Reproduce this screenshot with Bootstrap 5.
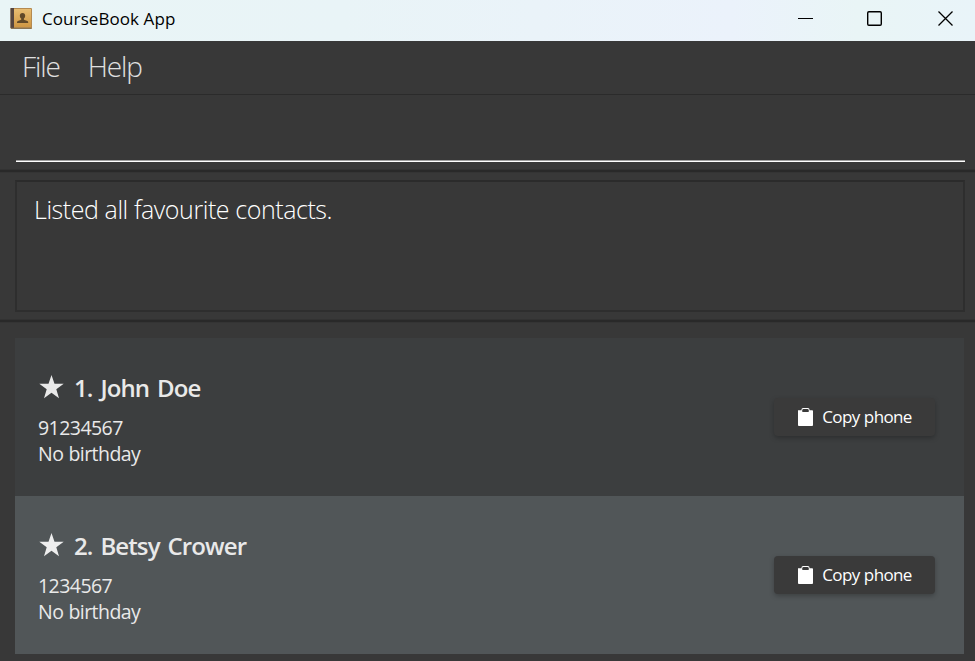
<!DOCTYPE html>
<html lang="en">
<head>
<meta charset="utf-8">
<meta name="viewport" content="width=device-width, initial-scale=1">
<title>CourseBook App</title>
<link href="https://cdn.jsdelivr.net/npm/bootstrap@5.3.0/dist/css/bootstrap.min.css" rel="stylesheet">
<style>
body { background: #383838; font-family: "Open Sans", "Noto Sans", sans-serif; color: #e9e9e9; }
.title-bar { height: 41px; background: linear-gradient(90deg, #e9f5f6 0%, #e9f4f7 35%, #ebf2fb 75%, #e9f5f6 88%, #e9f4f9 100%); color: #000; padding-left: 10px; }
.app-name { font-size: 17px; line-height: 24px; letter-spacing: .08px; margin-left: 10px; margin-top: -3px; }
.win-btns { margin-top: -3px; }
.menu-strip { height: 54px; border-bottom: 1px solid #2b2b2b; padding: 0 22px 3px; gap: 28px; }
.menu-strip a { font-size: 28px; font-weight: 300; line-height: 36px; color: #e0e0e0; letter-spacing: -1.1px; }
.command-area { height: 74px; padding: 0 10px 8px 16px; }
.command-line { height: 67px; border: 0; border-bottom: 1px solid #fff; box-shadow: inset 0 -1px #a0a0a0; background: transparent; border-radius: 0; }
.split-line { height: 4px; background: linear-gradient(#323232 0 1px, #292929 1px 3px, #343434 3px); }
.result-area { padding: 7px 10px 7px 15px; height: 146px; }
.result-box { height: 132px; border: 2px solid #2e2e2e; border-top-color: #2b2b2b; padding: 10px 17px; color: #fff; font-size: 25px; font-weight: 300; line-height: 34px; letter-spacing: -.43px; }
.person-list { padding: 15px 11px 7px 15px; }
.person { height: 158px; background: #3c3e3f; padding: 0 29px 0 23px; }
.person.alt { background: #515658; }
.person-text { padding-top: 3px; }
.person-name { font-size: 24px; font-weight: 600; line-height: 33px; letter-spacing: -.9px; word-spacing: 2.6px; gap: 9px; margin-bottom: 11px; }
.person-info { font-size: 19.5px; line-height: 26px; letter-spacing: -.55px; word-spacing: .6px; }
.copy-btn { width: 161px; height: 38px; background: #3a3a3a; color: #fff; border: 0; border-radius: 4px; box-shadow: 0 2px 5px rgba(0,0,0,.26); font-size: 17px; letter-spacing: -.63px; word-spacing: .5px; line-height: 24px; }
.copy-btn:hover { background: #444; color: #fff; }
</style>
</head>
<body class="vh-100 overflow-hidden">
<header class="title-bar d-flex align-items-center">
  <svg width="22" height="22" viewBox="0 0 22 22" style="margin-top:-4px">
    <defs><linearGradient id="cover" x1="0" y1="0" x2="0" y2="1"><stop offset="0" stop-color="#e8bd72"/><stop offset="1" stop-color="#cf9743"/></linearGradient></defs>
    <rect x=".5" y="0" width="21.5" height="21" rx="1" fill="#b58a50"/>
    <rect x=".5" y="0" width="3.5" height="20" fill="#54453f"/>
    <rect x="4" y="1" width="17" height="18" fill="url(#cover)"/>
    <path d="M1 20.4H21.5" stroke="#8b7552" stroke-width="1.2"/>
    <path d="M12.5 5c1.8 0 2.700 1.200 2.700 2.800 0 1.200-.6 2.200-1.300 2.800v1.200l3.500 1.300c.7.300.8 1 .8 2H7c0-1 .2-1.700.9-2l3.300-1.300v-1.200c-.8-.6-1.400-1.600-1.400-2.800C9.800 6.200 10.800 5 12.500 5z" fill="#614928"/>
  </svg>
  <span class="app-name">CourseBook App</span>
  <div class="win-btns ms-auto">
    <svg class="d-block" width="177" height="38" viewBox="0 0 177 38" fill="none" stroke="#000">
      <path d="M0 18.500H15"/>
      <rect x="69.700" y="11.700" width="13.600" height="13.600" rx="1.200" stroke-width="1.400"/>
      <path d="M140.500 11.500L154.500 25.500M154.500 11.500L140.500 25.500" stroke-width="1.300"/>
    </svg>
  </div>
</header>
<nav class="menu-strip d-flex align-items-center">
  <a class="text-decoration-none" href="#">File</a>
  <a class="text-decoration-none" href="#">Help</a>
</nav>
<div class="command-area">
  <input class="command-line w-100 d-block" type="text" aria-label="Command">
</div>
<div class="split-line"></div>
<section class="result-area"><div class="result-box"><span>Listed all favourite contacts.</span></div></section>
<div class="split-line"></div>
<main class="person-list">
  <article class="person d-flex align-items-center justify-content-between">
    <div class="person-text">
      <div class="person-name d-flex align-items-center">
        <svg width="27" height="26" viewBox="0 0 27 26" fill="#e9e9e9"><path d="M13.500 1l3 8.700h9.200l-7.400 5.600 2.700 8.900-7.500-5.400L6 24.200l2.700-8.900L1.300 9.700h9.200z"/></svg>
        <span>1. John Doe</span>
      </div>
      <div class="person-info"><span>91234567</span></div>
      <div class="person-info"><span>No birthday</span></div>
    </div>
    <button class="copy-btn btn d-flex align-items-center justify-content-center p-0 gap-2" type="button">
      <svg width="17" height="20" viewBox="0 0 17 20"><path d="M1 3.300H4.500V2.500Q4.500 1 6 1h5q1.500 0 1.500 1.500v.8h2.700q.8 0 .8.800v14q0 .900-.900.900H1.900Q1 19 1 18.100z" fill="#fff"/><path d="M5.300 5V3.200Q5.300 2 6.500 2h4q1.200 0 1.200 1.200V5z" fill="#3a3a3a"/></svg>
      <span>Copy phone</span>
    </button>
  </article>
  <article class="person alt d-flex align-items-center justify-content-between">
    <div class="person-text">
      <div class="person-name d-flex align-items-center">
        <svg width="27" height="26" viewBox="0 0 27 26" fill="#eeeeee"><path d="M13.500 1l3 8.700h9.200l-7.400 5.600 2.700 8.900-7.500-5.400L6 24.200l2.700-8.900L1.300 9.700h9.200z"/></svg>
        <span>2. Betsy Crower</span>
      </div>
      <div class="person-info"><span>1234567</span></div>
      <div class="person-info"><span>No birthday</span></div>
    </div>
    <button class="copy-btn btn d-flex align-items-center justify-content-center p-0 gap-2" type="button">
      <svg width="17" height="20" viewBox="0 0 17 20"><path d="M1 3.300H4.500V2.500Q4.500 1 6 1h5q1.500 0 1.500 1.500v.8h2.700q.8 0 .8.800v14q0 .900-.900.900H1.900Q1 19 1 18.100z" fill="#fff"/><path d="M5.300 5V3.200Q5.300 2 6.500 2h4q1.200 0 1.200 1.200V5z" fill="#3a3a3a"/></svg>
      <span>Copy phone</span>
    </button>
  </article>
</main>
<script src="https://cdn.jsdelivr.net/npm/bootstrap@5.3.0/dist/js/bootstrap.bundle.min.js"></script>
</body>
</html>
